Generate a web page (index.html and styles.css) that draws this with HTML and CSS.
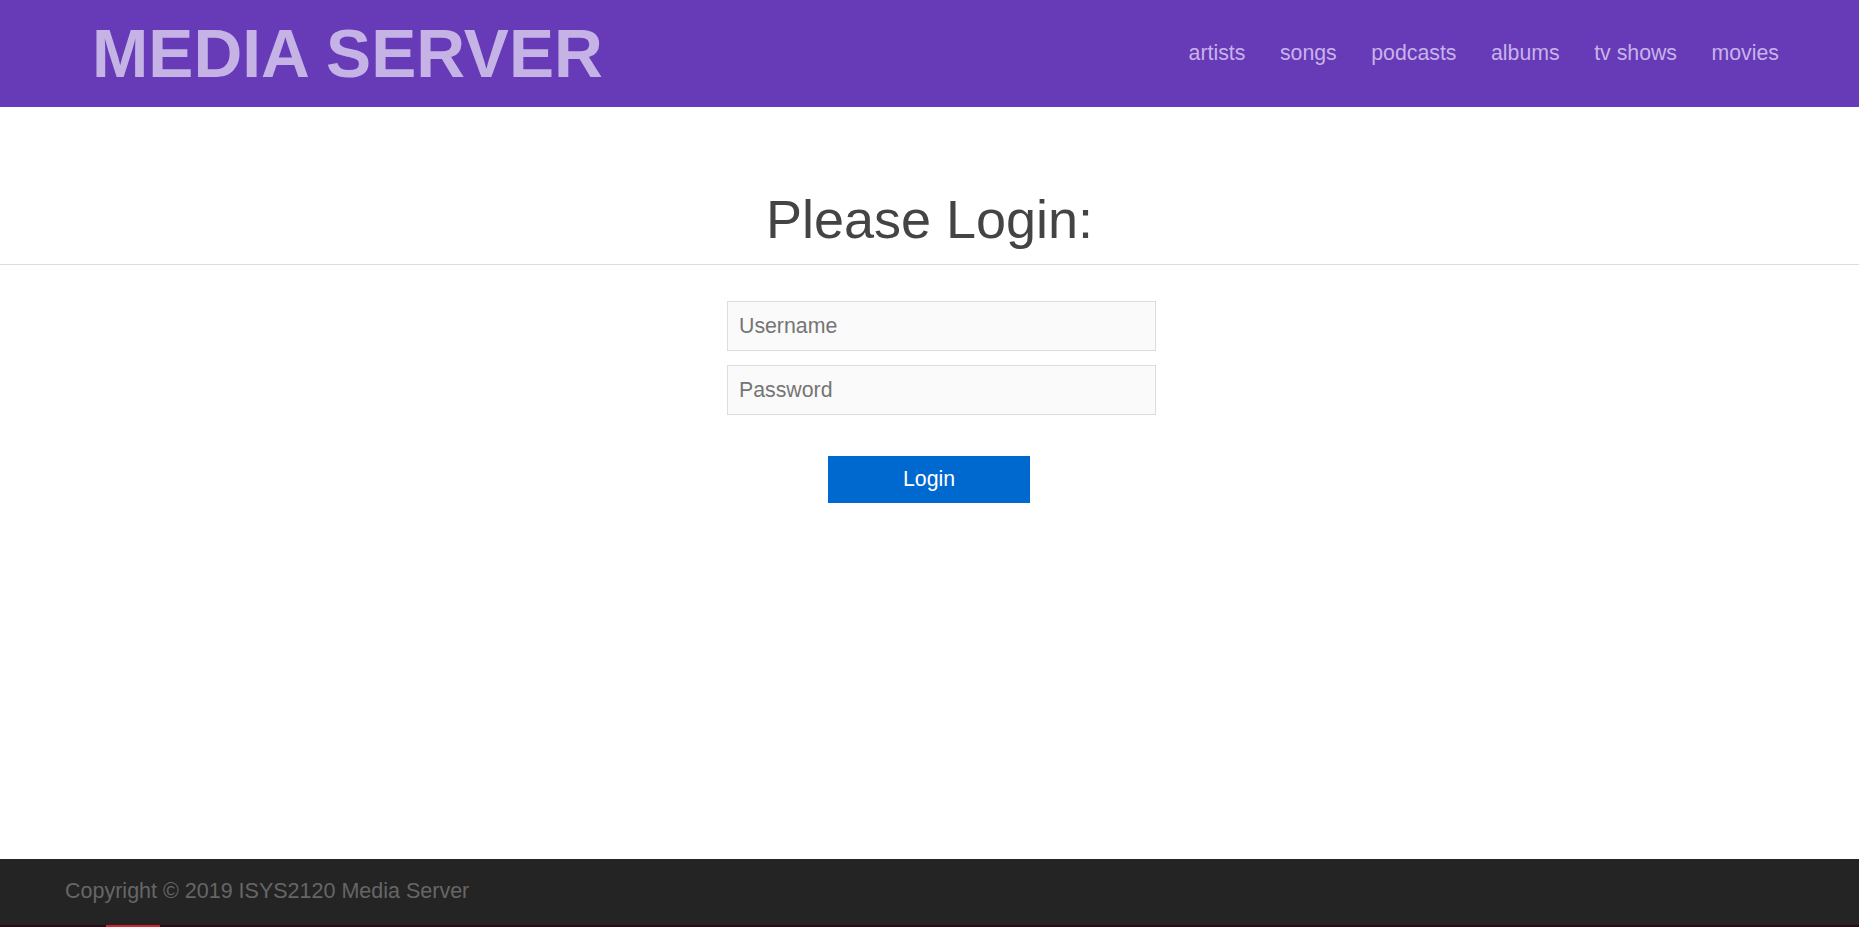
FILE: index.html
```html
<!DOCTYPE html>
<html lang="en">
<head>
<meta charset="utf-8">
<title>Media Server - Login</title>
<link rel="stylesheet" href="styles.css">
</head>
<body>
<header class="site-header">
  <h1 class="brand">MEDIA SERVER</h1>
  <nav class="main-nav">
    <a href="#" class="nav-link">artists</a>
    <a href="#" class="nav-link">songs</a>
    <a href="#" class="nav-link">podcasts</a>
    <a href="#" class="nav-link">albums</a>
    <a href="#" class="nav-link">tv shows</a>
    <a href="#" class="nav-link">movies</a>
  </nav>
</header>
<main class="content">
  <h2 class="page-title">Please Login:</h2>
  <form class="login-form">
    <input class="field" type="text" placeholder="Username">
    <input class="field" type="password" placeholder="Password">
    <button class="login-btn" type="button">Login</button>
  </form>
</main>
<footer class="site-footer">
  <div class="footer-text">Copyright © 2019 ISYS2120 Media Server</div>
  <div class="footer-strip"><span class="strip-accent"></span></div>
</footer>
</body>
</html>
```

FILE: styles.css
```css
* {
  box-sizing: border-box;
}

html, body {
  margin: 0;
  padding: 0;
}

body {
  font-family: "Liberation Sans", Arial, sans-serif;
  background: #ffffff;
  min-height: 100vh;
  display: flex;
  flex-direction: column;
}

.site-header {
  height: 107px;
  background: #673ab7;
  display: flex;
  align-items: center;
  justify-content: space-between;
  padding: 0 80px 0 92px;
  flex-shrink: 0;
}

.brand {
  margin: 0;
  font-size: 67.6px;
  font-weight: bold;
  line-height: 77px;
  color: #c6b3e6;
}

.main-nav {
  display: flex;
  gap: 34.5px;
  align-items: center;
}

.nav-link {
  font-size: 21.3px;
  color: #c7b3ea;
  text-decoration: none;
  line-height: 25px;
}

.content {
  flex: 1;
  display: flex;
  flex-direction: column;
  align-items: center;
}

.page-title {
  align-self: stretch;
  margin: 81px 0 0;
  padding-bottom: 14px;
  border-bottom: 1px solid #dddddd;
  text-align: center;
  font-size: 54px;
  font-weight: normal;
  line-height: 62px;
  color: #444444;
}

.login-form {
  width: 405px;
  margin-top: 36px;
  display: flex;
  flex-direction: column;
  align-items: flex-start;
}

.field {
  box-sizing: content-box;
  width: 100%;
  height: 48px;
  padding: 0 11px 0 11px;
  margin: 0 0 14px;
  border: 1px solid #dddddd;
  background: #fafafa;
  font-family: "Liberation Sans", Arial, sans-serif;
  font-size: 21.3px;
  color: #333333;
  outline: none;
}

.field::placeholder {
  color: #757575;
}

.login-btn {
  align-self: center;
  width: 202px;
  height: 47px;
  margin-top: 27px;
  margin-right: 1px;
  border: none;
  background: #0069d0;
  color: #ffffff;
  font-family: "Liberation Sans", Arial, sans-serif;
  font-size: 21.3px;
  cursor: pointer;
}

.site-footer {
  flex-shrink: 0;
  background: #242424;
  display: flex;
  flex-direction: column;
}

.footer-text {
  padding: 20px 64px 21px 65px;
  font-size: 21.5px;
  line-height: 25px;
  color: #666666;
}

.footer-strip {
  height: 2px;
  background: #2e0b14;
  display: flex;
}

.strip-accent {
  width: 54px;
  margin-left: 106px;
  background: #d32232;
}
```
